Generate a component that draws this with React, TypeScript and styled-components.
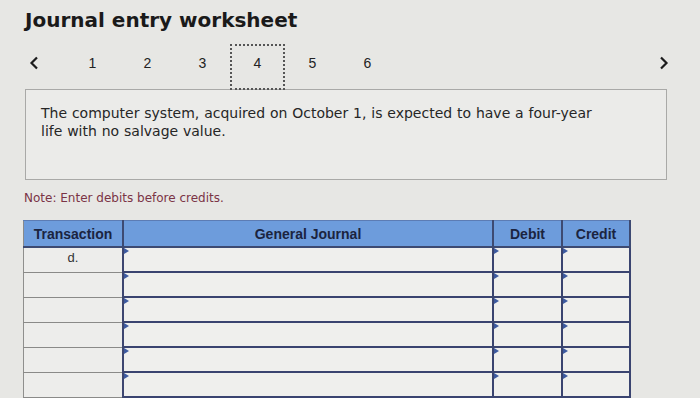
import React from "react";
import styled, { createGlobalStyle } from "styled-components";

const Global = createGlobalStyle`
  html, body { margin: 0; padding: 0; background: #e7e7e4; }
  body { width: 700px; height: 398px; overflow: hidden; }
`;

const Page = styled.div`
  width: 700px;
  height: 398px;
  background: #e7e7e4;
  font-family: "DejaVu Sans", Verdana, sans-serif;
  color: #1e1e1e;
  box-sizing: border-box;
  padding-top: 7px;
`;

const Title = styled.h1`
  margin: 0 0 0 25px;
  font-family: "DejaVu Sans", Verdana, sans-serif;
  font-weight: bold;
  font-size: 20px;
  line-height: 26px;
  color: #1a1a1a;
`;

const Nav = styled.div`
  display: flex;
  align-items: stretch;
  height: 46px;
  margin-top: 11px;
  padding-left: 25px;
  font-family: "Liberation Sans", Arial, sans-serif;
`;

const Chevron = styled.div<{ $right?: boolean }>`
  display: flex;
  padding-top: 12px;
  box-sizing: border-box;
  padding-left: ${(p) => (p.$right ? "0" : "4px")};
  margin-left: ${(p) => (p.$right ? "auto" : "0")};
  margin-right: ${(p) => (p.$right ? "31px" : "0")};
  width: ${(p) => (p.$right ? "10px" : "40px")};
`;

const Step = styled.div<{ $active?: boolean }>`
  width: 55px;
  box-sizing: border-box;
  text-align: center;
  font-size: 14px;
  color: #222;
  padding-top: 9px;
  border: ${(p) => (p.$active ? "2px dotted #555" : "2px solid transparent")};
`;

const Info = styled.div`
  margin: -1px 0 0 25px;
  width: 642px;
  height: 91px;
  box-sizing: border-box;
  border: 1px solid #a9a9a7;
  background: #ebebe9;
  padding: 14px 15px;
  font-size: 14px;
  line-height: 18px;
  color: #262626;
`;

const InfoText = styled.p`
  margin: 0;
  max-width: 562px;
  word-spacing: 0.4px;
`;

const Note = styled.div`
  margin: 11px 0 0 24px;
  font-size: 12px;
  line-height: 15px;
  color: #7b3446;
`;

const Table = styled.table`
  margin: 14px 0 0 23px;
  border-collapse: collapse;
  table-layout: fixed;
  font-family: "Liberation Sans", Arial, sans-serif;
`;

const Th = styled.th<{ $w: number }>`
  width: ${(p) => p.$w}px;
  height: 25px;
  padding: 0;
  background: #6d9cdc;
  color: #1b2440;
  font-size: 14px;
  font-weight: bold;
  text-align: center;
  border: 2px solid #3d4a72;
  border-top: 1px solid #5c7cb4;
  &:first-child {
    border-left: 1px solid #8a8a8a;
  }
`;

const TxCell = styled.td`
  height: 23px;
  padding: 0;
  background: #ededeb;
  border-left: 1px solid #8f8f8d;
  border-bottom: 1px solid #8a8a88;
  border-right: 2px solid #3d4670;
  text-align: center;
  vertical-align: top;
  font-size: 13px;
  color: #333;
  line-height: 20px;
`;

const InputCell = styled.td`
  height: 23px;
  padding: 0;
  position: relative;
  background: #efefed;
  border: 2.5px solid #3a4470;
  &::before {
    content: "";
    position: absolute;
    left: 0;
    top: 0;
    border-left: 5px solid #3d5aa0;
    border-top: 3px solid transparent;
    border-bottom: 3px solid transparent;
  }
`;

const Arrow = ({ dir }: { dir: "l" | "r" }) => (
  <svg width="10" height="14" viewBox="0 0 10 14">
    <path
      d={dir === "l" ? "M8 1.5 L2.5 7 L8 12.5" : "M2 1.5 L7.5 7 L2 12.5"}
      fill="none"
      stroke="#1d1d1d"
      strokeWidth="2.2"
    />
  </svg>
);

export default function App() {
  const rows = ["d.", "", "", "", "", ""];
  return (
    <Page>
      <Global />
      <Title>Journal entry worksheet</Title>
      <Nav>
        <Chevron>
          <Arrow dir="l" />
        </Chevron>
        {[1, 2, 3, 4, 5, 6].map((n) => (
          <Step key={n} $active={n === 4}>
            {n}
          </Step>
        ))}
        <Chevron $right>
          <Arrow dir="r" />
        </Chevron>
      </Nav>
      <Info>
        <InfoText>
          The computer system, acquired on October 1, is expected to have a four-year
          life with no salvage value.
        </InfoText>
      </Info>
      <Note>Note: Enter debits before credits.</Note>
      <Table>
        <thead>
          <tr>
            <Th $w={98}>Transaction</Th>
            <Th $w={368}>General Journal</Th>
            <Th $w={67}>Debit</Th>
            <Th $w={66}>Credit</Th>
          </tr>
        </thead>
        <tbody>
          {rows.map((r, i) => (
            <tr key={i}>
              <TxCell>{r}</TxCell>
              <InputCell />
              <InputCell />
              <InputCell />
            </tr>
          ))}
        </tbody>
      </Table>
    </Page>
  );
}
